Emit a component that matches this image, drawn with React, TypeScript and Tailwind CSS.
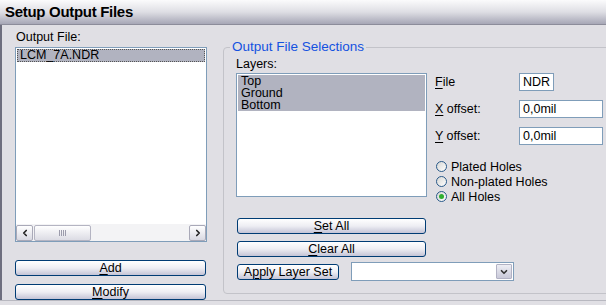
import React from "react";
import { ChevronDown, ChevronLeft, ChevronRight } from "lucide-react";

// mnemonic letter, underlined like a Win32 accelerator
function Mn({ text, at }: { text: string; at: number }) {
  return (
    <>
      {text.slice(0, at)}
      <span className="underline underline-offset-[2px]">{text[at]}</span>
      {text.slice(at + 1)}
    </>
  );
}

function XpButton({
  children,
  className = "",
}: {
  children: React.ReactNode;
  className?: string;
}) {
  return (
    <button
      type="button"
      className={`flex h-[16px] shrink-0 items-center justify-center rounded-[3px] border border-[#003c74] bg-linear-to-b from-white via-[#eeeef3] to-[#c4c4d6] text-[12.5px] leading-[14px] text-black ${className}`}
    >
      {children}
    </button>
  );
}

function Radio({ label, checked }: { label: string; checked?: boolean }) {
  return (
    <div className="flex h-[15px] items-center">
      <span className="ml-[1px] flex h-[11px] w-[11px] items-center justify-center rounded-full border border-[#2a5a8a] bg-linear-to-br from-[#d6d6d4] to-white">
        {checked && <span className="h-[5px] w-[5px] rounded-full bg-[#2fae2f]" />}
      </span>
      <span className="ml-[4px] leading-[14px]">{label}</span>
    </div>
  );
}

function Field({
  label,
  value,
  width,
}: {
  label: React.ReactNode;
  value: string;
  width: string;
}) {
  return (
    <div className="flex h-[18px] items-center">
      <span className="w-[84px] leading-[14px]">{label}</span>
      <div
        className={`flex h-[18px] items-center border border-[#7f9db9] bg-white pl-[3px] leading-[14px] ${width}`}
      >
        {value}
      </div>
    </div>
  );
}

function HScrollBar() {
  return (
    <div className="flex h-[17px] items-center gap-[1px] bg-[#f3f3f5]">
      <div className="flex h-[16px] w-[17px] items-center justify-center rounded-[2px] border border-[#a9a9b8] bg-linear-to-b from-white to-[#d9d9e2]">
        <ChevronLeft size={10} strokeWidth={4} className="text-[#222]" />
      </div>
      <div className="flex h-[16px] w-[57px] items-center justify-center gap-[1px] rounded-[2px] border border-[#b4b4c2] bg-linear-to-b from-white to-[#dcdce4]">
        <span className="h-[6px] w-[1px] bg-[#9c9cac]" />
        <span className="h-[6px] w-[1px] bg-[#9c9cac]" />
        <span className="h-[6px] w-[1px] bg-[#9c9cac]" />
        <span className="h-[6px] w-[1px] bg-[#9c9cac]" />
      </div>
      <div className="flex-1" />
      <div className="flex h-[16px] w-[17px] items-center justify-center rounded-[2px] border border-[#a9a9b8] bg-linear-to-b from-white to-[#d9d9e2]">
        <ChevronRight size={10} strokeWidth={4} className="text-[#222]" />
      </div>
    </div>
  );
}

export default function App() {
  return (
    <div className="h-[305px] w-[606px] overflow-hidden bg-[#e0dfe4] font-['Liberation_Sans',Arial,sans-serif] text-[12.5px] text-black">
      {/* title bar */}
      <div className="flex h-[25px] items-center border-b border-[#8c8c9a] bg-linear-to-b from-[#fbfbfc] via-[#dedee4] to-[#a7a7b6] pl-[5px]">
        <span className="text-[15px] font-bold leading-[18px] tracking-[-0.3px]">
          Setup Output Files
        </span>
      </div>

      <div className="flex h-[275px] border-l-2 border-[#6e6e7e]">
        {/* left column */}
        <div className="flex w-[205px] shrink-0 flex-col pl-[13px]">
          <div className="mt-[5px] h-[15px] pl-[1px] leading-[15px]">Output File:</div>
          <div className="mt-[2px] flex h-[195px] w-[192px] flex-col border border-[#7f9db9] bg-white">
            <div className="mx-[1px] mt-[1px] h-[13px] border border-dotted border-[#555] bg-[#b1b3c0] pl-[2px] leading-[11px]">
              LCM_7A.NDR
            </div>
            <div className="flex-1" />
            <HScrollBar />
          </div>
          <XpButton className="mt-[18px] w-[191px]">
            <Mn text="Add" at={0} />
          </XpButton>
          <XpButton className="mt-[8px] w-[191px]">
            <Mn text="Modify" at={0} />
          </XpButton>
        </div>

        {/* right group box */}
        <div className="ml-[16px] mt-[22px] h-[247px] w-[400px] shrink-0">
          <div className="relative h-full rounded-[4px] border border-[#c3c3c9] pl-[12px]">
            <span className="absolute -top-[8px] left-[6px] bg-[#e0dfe4] px-[2px] text-[13.5px] leading-[14px] text-[#1452e0]">
              Output File Selections
            </span>

            <div className="flex">
              <div className="flex w-[191px] shrink-0 flex-col">
                <div className="mt-[9px] h-[15px] leading-[15px]">Layers:</div>
                <div className="mt-[1px] h-[124px] border border-[#7f9db9] bg-white px-[1px] pt-[1px]">
                  <div className="bg-[#b1b3c0] pl-[3px] leading-[12px]">
                    <div className="h-[12px]">Top</div>
                    <div className="h-[12px]">Ground</div>
                    <div className="h-[12px]">Bottom</div>
                  </div>
                </div>
              </div>

              <div className="ml-[8px] flex flex-col pt-[25px]">
                <Field label={<Mn text="File" at={0} />} value="NDR" width="w-[35px]" />
                <div className="mt-[9px]">
                  <Field label={<Mn text="X offset:" at={0} />} value="0,0mil" width="w-[84px]" />
                </div>
                <div className="mt-[9px]">
                  <Field label={<Mn text="Y offset:" at={0} />} value="0,0mil" width="w-[84px]" />
                </div>
                <div className="mt-[14px] flex flex-col">
                  <Radio label="Plated Holes" />
                  <Radio label="Non-plated Holes" />
                  <Radio label="All Holes" checked />
                </div>
              </div>
            </div>

            <div className="ml-[1px] mt-[14px] flex flex-col">
              <XpButton className="w-[189px]">
                <Mn text="Set All" at={0} />
              </XpButton>
              <XpButton className="mt-[7px] w-[189px]">
                <Mn text="Clear All" at={0} />
              </XpButton>
              <div className="mt-[5px] flex h-[19px] items-center">
                <XpButton className="w-[102px]">
                  <Mn text="Apply Layer Set" at={1} />
                </XpButton>
                <div className="ml-[12px] flex h-[19px] w-[163px] items-stretch border border-[#7f9db9] bg-white p-[1px]">
                  <div className="flex-1" />
                  <div className="flex w-[16px] items-center justify-center rounded-[1px] border border-[#b2b2c4] bg-linear-to-b from-[#eeeef4] to-[#c9c9d9]">
                    <ChevronDown size={10} strokeWidth={4} className="text-[#333]" />
                  </div>
                </div>
              </div>
            </div>
          </div>
        </div>
      </div>

      <div className="h-[1px] bg-[#b8b8c0]" />
    </div>
  );
}
